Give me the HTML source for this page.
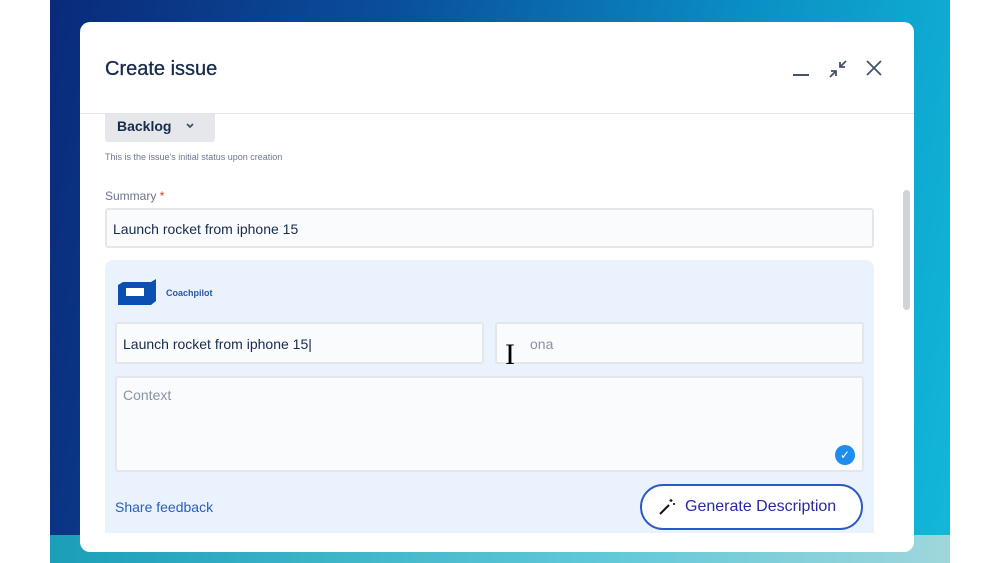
<!DOCTYPE html>
<html><head><style>
*{box-sizing:border-box;margin:0;padding:0}
body{width:1000px;height:563px;background:#fff;position:relative;overflow:hidden;font-family:"Liberation Sans",sans-serif}
.bg{position:absolute;left:50px;top:0;width:900px;height:563px;background:linear-gradient(100deg,#0a2a7a 0%,#0a4f9c 35%,#0a8fc4 70%,#12b8d8 100%)}
.bg2{position:absolute;left:50px;top:535px;width:900px;height:28px;background:linear-gradient(90deg,#1a9fb8,#5ec8d8 60%,#9fd6dc)}
.modal{position:absolute;left:80px;top:22px;width:834px;height:530px;background:#fff;border-radius:10px;overflow:hidden}
.abs{position:absolute}
.t{position:absolute;white-space:nowrap}
.inp{position:absolute;background:#fafbfc;border:2px solid #e4e6ea;border-radius:3px}
</style></head><body>
<div class="bg"></div><div class="bg2"></div>
<div class="modal">
<div class="t" style="left:25px;top:36px;font-size:20px;color:#172b4d;font-weight:500;-webkit-text-stroke:0.3px #172b4d">Create issue</div>
<div class="abs" style="left:713px;top:52px;width:16px;height:2px;background:#42526e"></div>
<svg class="abs" style="left:748px;top:37px" width="20" height="20" viewBox="0 0 20 20" fill="none" stroke="#42526e" stroke-width="1.8"><path d="M18 2l-6 6M12 3v5h5M2 18l6-6M8 17v-5H3"/></svg>
<svg class="abs" style="left:786px;top:38px" width="16" height="16" viewBox="0 0 16 16" stroke="#42526e" stroke-width="1.8"><path d="M1 1l14 14M15 1L1 15"/></svg>
<div class="abs" style="left:0;top:91px;width:834px;height:1px;background:#e4e6ea"></div>
<div class="abs" style="left:823px;top:168px;width:7px;height:120px;background:#d0d3d8;border-radius:4px"></div>
<div class="abs" style="left:25px;top:92px;width:110px;height:28px;background:#e5e7ea;border-radius:0 0 3px 3px"></div>
<div class="t" style="left:37px;top:96px;font-size:14px;color:#172b4d;font-weight:bold">Backlog</div>
<svg class="abs" style="left:105px;top:100px" width="10" height="8" viewBox="0 0 10 8" fill="none" stroke="#42526e" stroke-width="1.8"><path d="M2 2l3 3 3-3"/></svg>
<div class="t" style="left:25px;top:130px;font-size:9px;color:#6b778c">This is the issue's initial status upon creation</div>
<div class="t" style="left:25px;top:167px;font-size:12px;color:#6b778c">Summary <span style="color:#de350b">*</span></div>
<div class="inp" style="left:25px;top:186px;width:769px;height:40px"></div>
<div class="t" style="left:33px;top:199px;font-size:14px;color:#172b4d">Launch rocket from iphone 15</div>
<div class="abs" style="left:25px;top:238px;width:769px;height:273px;background:#e9f2fd;border-radius:8px 8px 0 0"></div>
<svg class="abs" style="left:37px;top:256px" width="42" height="28" viewBox="0 0 42 28"><path d="M6 4h28l5-3v22l-5 4H1V7z" fill="#0b4fb3"/><rect x="9" y="10" width="18" height="8" fill="#fff"/></svg>
<div class="t" style="left:86px;top:266px;font-size:9px;color:#2a56a8;font-weight:bold">Coachpilot</div>
<div class="inp" style="left:35px;top:300px;width:369px;height:42px;background:#fafbfc"></div>
<div class="t" style="left:43px;top:314px;font-size:14px;color:#172b4d">Launch rocket from iphone 15|</div>
<div class="inp" style="left:415px;top:300px;width:369px;height:42px"></div>
<div class="t" style="left:450px;top:314px;font-size:14px;color:#8993a4">ona</div>
<div class="t" style="left:425px;top:316px;font-size:30px;color:#000;font-family:'Liberation Serif',serif">I</div>
<div class="inp" style="left:35px;top:354px;width:749px;height:96px"></div>
<div class="t" style="left:43px;top:365px;font-size:14px;color:#8993a4">Context</div>
<div class="abs" style="left:755px;top:423px;width:20px;height:20px;border-radius:50%;background:#1f8cf0;color:#fff;font-size:12px;text-align:center;line-height:20px">✓</div>
<div class="t" style="left:35px;top:477px;font-size:14px;color:#2a5eb8">Share feedback</div>
<div class="abs" style="left:560px;top:462px;width:223px;height:46px;border:2px solid #2a5ac8;border-radius:23px;background:#fff"></div>
<svg class="abs" style="left:578px;top:476px" width="18" height="18" viewBox="0 0 18 18" fill="none" stroke="#111" stroke-width="2"><path d="M2 16l9-9"/><path d="M13 1v3M11.5 2.5h3M16 5v2M15 6h2" stroke-width="1.2"/></svg>
<div class="t" style="left:605px;top:476px;font-size:16px;color:#2a2a9a">Generate Description</div>
</div>
</body></html>
